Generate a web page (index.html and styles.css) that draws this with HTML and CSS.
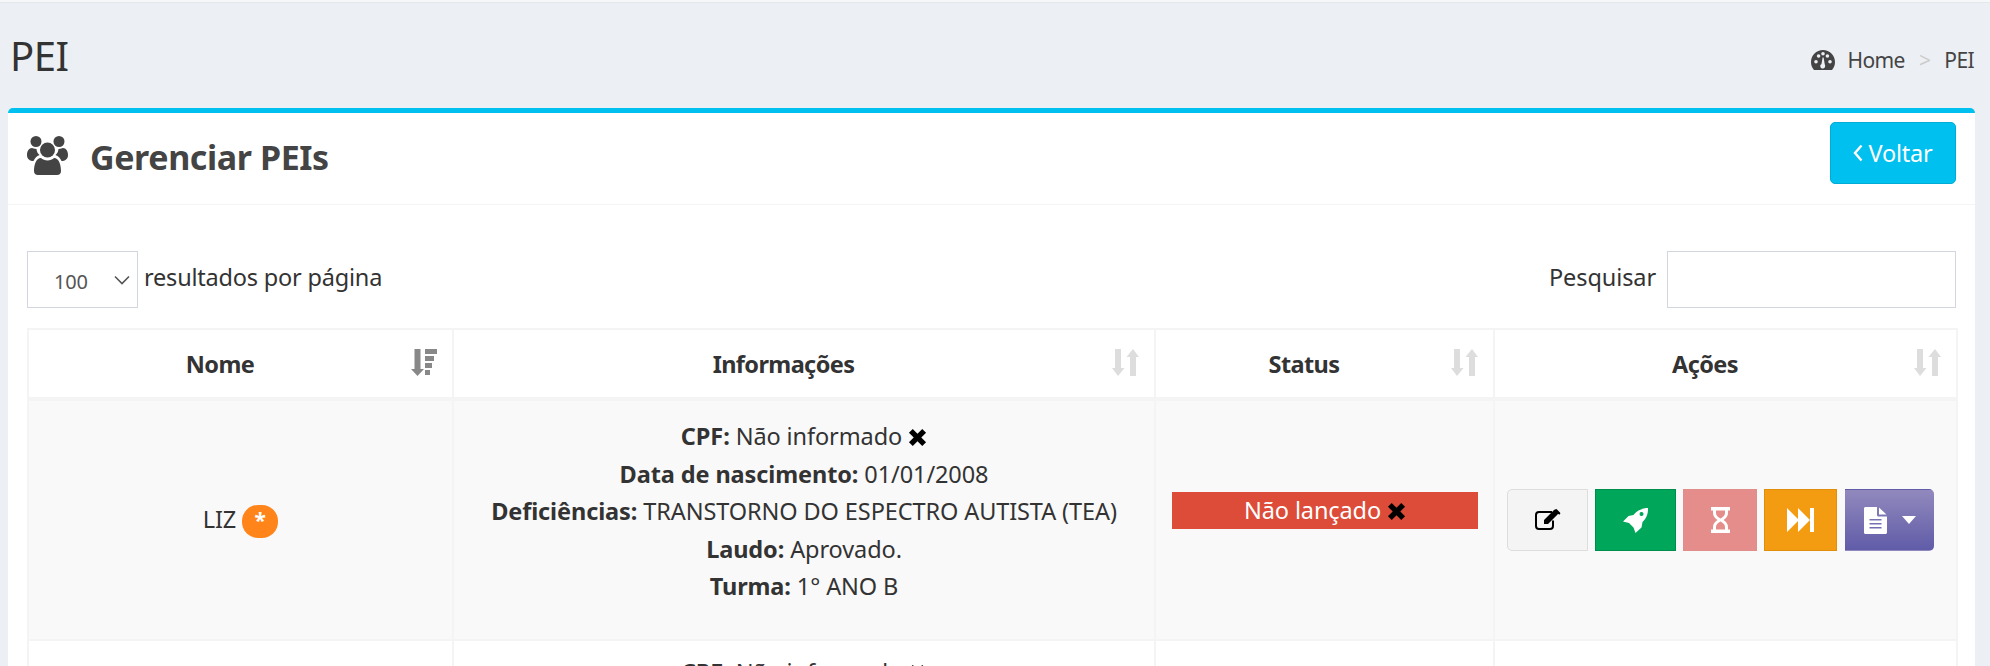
FILE: index.html
```html
<!DOCTYPE html>
<html lang="pt-BR">
<head>
    <meta charset="UTF-8">
    <title>PEI</title>
    <link rel="stylesheet" href="styles.css">
</head>
<body>
    <div class="topbar"></div>
    <div class="content-header">
        <h1 class="page-title">PEI</h1>
        <ol class="breadcrumb">
            <li class="crumb">
                <svg class="crumb-icon" viewBox="0 0 24 20"><path fill-rule="evenodd" d="M12 0C5.400 0 0 5.400 0 12c0 2.900 1 5.600 2.800 7.700.2.200.5.300.8.300h16.800c.3 0 .6-.1.800-.3C23 17.600 24 14.900 24 12 24 5.400 18.600 0 12 0zM5 13.500a1.800 1.800 0 1 1 0-3.600 1.800 1.800 0 0 1 0 3.600zm2.600-5.700a1.800 1.800 0 1 1 0-3.600 1.800 1.800 0 0 1 0 3.600zM12 5.500a1.800 1.800 0 1 1 0-3.600 1.800 1.800 0 0 1 0 3.600zm2.200 10.300a2.500 2.500 0 1 1-3.700-1.900l1.100-6.300h1l1.100 6.300c.2.600.4 1.300.5 1.900zm2.200-8a1.800 1.800 0 1 1 0-3.600 1.800 1.800 0 0 1 0 3.600zm2.600 5.700a1.800 1.800 0 1 1 0-3.600 1.800 1.800 0 0 1 0 3.600z"/></svg>
                Home
            </li>
            <li class="crumb-sep">&gt;</li>
            <li class="crumb">PEI</li>
        </ol>
    </div>

    <section class="box">
        <div class="box-header">
            <h3 class="box-title">
                <svg class="title-icon" viewBox="0 0 41 39"><circle cx="9" cy="5.500" r="5.500"/><circle cx="32" cy="5.500" r="5.500"/><circle cx="20.500" cy="14" r="7.500"/><path d="M0 19c0-4 2-7 5-7 1 0 2 .8 4.500 1 .2 2.500 1.200 4.500 3 6-3 1-5 3.500-6 6C3 25 0 23 0 19zM41 19c0-4-2-7-5-7-1 0-2 .8-4.500 1-.2 2.500-1.200 4.500-3 6 3 1 5 3.500 6 6 3.500 0 6.500-2 6.500-6zM11 39c-2.500 0-4-1.500-4-4 0-6 2-13 7-13 1.500 1.500 4 2.500 6.500 2.500s5-1 6.500-2.500c5 0 7 7 7 13 0 2.500-1.500 4-4 4z"/></svg>
                <span class="title-text">Gerenciar PEIs</span>
            </h3>
            <a class="btn-back"><svg class="back-icon" viewBox="0 0 10 18"><path d="M8.500 1.500 2 9l6.500 7.500" fill="none" stroke="#fff" stroke-width="2.400"/></svg>Voltar</a>
        </div>

        <div class="box-body">
            <div class="table-tools">
                <label class="length-control">
                    <span class="fake-select">
                        <span class="select-value">100</span>
                        <svg class="select-arrow" viewBox="0 0 16 10"><path d="M1 1.500 8 8.500l7-7" fill="none" stroke="#555" stroke-width="1.600"/></svg>
                    </span>
                    resultados por página
                </label>
                <label class="search-control">
                    Pesquisar
                    <span class="search-input"></span>
                </label>
            </div>

            <table class="data-table">
                <colgroup>
                    <col class="col-nome">
                    <col class="col-info">
                    <col class="col-status">
                    <col class="col-acoes">
                </colgroup>
                <thead>
                    <tr>
                        <th>Nome
                            <svg class="sort-icon sort-active" viewBox="0 0 26 27"><path d="M3.500 0h6v20h3.500l-6.500 7L0 20h3.500zM14 0h12v5H14zM14 7h9v5h-9zM14 14h7v5h-7zM14 21h5v5h-5z"/></svg>
                        </th>
                        <th>Informações
                            <svg class="sort-icon" viewBox="0 0 27 27"><path d="M3 0h6v19h3.500L6 27l-6-8h3zM18 8h-3.500L21 0l6 8h-3v19h-6z"/></svg>
                        </th>
                        <th>Status
                            <svg class="sort-icon" viewBox="0 0 27 27"><path d="M3 0h6v19h3.500L6 27l-6-8h3zM18 8h-3.500L21 0l6 8h-3v19h-6z"/></svg>
                        </th>
                        <th>Ações
                            <svg class="sort-icon" viewBox="0 0 27 27"><path d="M3 0h6v19h3.500L6 27l-6-8h3zM18 8h-3.500L21 0l6 8h-3v19h-6z"/></svg>
                        </th>
                    </tr>
                </thead>
                <tbody>
                    <tr class="row-odd">
                        <td>LIZ <span class="badge">*</span></td>
                        <td class="info-cell">
                            <b>CPF:</b> Não informado <svg class="x-icon" viewBox="0 0 20 20"><path d="M1 5l4-4 5 5 5-5 4 4-5 5 5 5-4 4-5-5-5 5-4-4 5-5z"/></svg><br>
                            <b>Data de nascimento:</b> 01/01/2008<br>
                            <b>Deficiências:</b> TRANSTORNO DO ESPECTRO AUTISTA (TEA)<br>
                            <b>Laudo:</b> Aprovado.<br>
                            <b>Turma:</b> 1° ANO B
                        </td>
                        <td class="status-cell">
                            <div class="status-label">Não lançado <svg class="x-icon" viewBox="0 0 20 20"><path d="M1 5l4-4 5 5 5-5 4 4-5 5 5 5-4 4-5-5-5 5-4-4 5-5z"/></svg></div>
                        </td>
                        <td>
                            <div class="btn-group">
                                <a class="act act-edit">
                                    <svg viewBox="0 0 26 22" width="26" height="22"><path d="M18 11.500V17a3 3 0 0 1-3 3H4a3 3 0 0 1-3-3V6a3 3 0 0 1 3-3h13" fill="none" stroke="#000" stroke-width="2"/><path d="M9 11 19.500 .5l4 4L13 15H9zM20.500 .2c.5-.4 1-.2 1.500.2l3 3c.4.500.4 1 0 1.500l-.8.800-4.500-4.500z"/></svg>
                                </a>
                                <a class="act act-green">
                                    <svg viewBox="0 0 25 25" width="25" height="25"><path fill="#fff" fill-rule="evenodd" d="M25 0c.2 5-1 10-5.500 14l-1 5.500L12.500 25l-2-5.500-4.500-4.500-6-1.500L5.500 8l5-1C14.500 2 20 0 25 0zM19 4a2 2 0 1 0 0 3.900A2 2 0 0 0 19 4z"/></svg>
                                </a>
                                <a class="act act-pink">
                                    <svg viewBox="0 0 19 26" width="19" height="26"><path fill="#fff" fill-rule="evenodd" d="M0 0h19v3.500h-2V6c0 3-2 5.500-4.500 7 2.500 1.500 4.500 4 4.500 7v2.500h2V26H0v-3.500h2V20c0-3 2-5.500 4.500-7C4 11.500 2 9 2 6V3.500H0zM5 3.500V6c0 2 1.500 4 4.500 5.500C12.500 10 14 8 14 6V3.500zM9.500 14.500C6.500 16 5 18 5 20v2.500h9V20c0-2-1.500-4-4.500-5.500z"/></svg>
                                </a>
                                <a class="act act-orange">
                                    <svg viewBox="0 0 27 24" width="27" height="24"><path fill="#fff" d="M0 0l12 12L0 24zM11 0l12 12-12 12zM23 0h4v24h-4z"/></svg>
                                </a>
                                <a class="act act-purple">
                                    <svg viewBox="0 0 23 27" width="23" height="27"><path fill="#fff" fill-rule="evenodd" d="M0 1.500C0 .7.700 0 1.500 0H13v8c0 .8.700 1.500 1.500 1.500H23v16c0 .8-.7 1.500-1.500 1.500h-20C.7 27 0 26.300 0 25.500zM15 .5 22.500 7.500H15zM5.500 12v1.500h12V12zM5.500 16v1.500h12V16zM5.500 20v1.500h12V20z"/></svg>
                                    <span class="caret"></span>
                                </a>
                            </div>
                        </td>
                    </tr>
                    <tr>
                        <td></td>
                        <td class="info-cell info-next">
                            <b>CPF:</b> Não informado <svg class="x-icon" viewBox="0 0 20 20"><path d="M1 5l4-4 5 5 5-5 4 4-5 5 5 5-4 4-5-5-5 5-4-4 5-5z"/></svg>
                        </td>
                        <td></td>
                        <td></td>
                    </tr>
                </tbody>
            </table>
        </div>
    </section>
</body>
</html>
```

FILE: styles.css
```css
* {
    box-sizing: border-box;
}

html, body {
    height: 666px;
    overflow: hidden;
}

body {
    margin: 0;
    background-color: #ecf0f5;
    color: #333;
    font-family: "Noto Sans", sans-serif;
    font-size: 23.500px;
    letter-spacing: -0.1px;
}

b {
    letter-spacing: -0.1px;
}

.topbar {
    height: 3px;
    border-bottom: 1px solid #e3e6ea;
    background-color: #f6f7f9;
}

.content-header {
    display: flex;
    justify-content: space-between;
    align-items: center;
    height: 105px;
    padding: 0 16px 0 10px;
}

.page-title {
    margin: 0;
    color: #333;
    font-size: 40px;
    font-weight: 400;
    letter-spacing: -0.5px;
}

.breadcrumb {
    display: flex;
    align-items: center;
    gap: 14px;
    margin: 8px 0 0;
    padding: 0;
    list-style: none;
    color: #444;
    font-size: 21px;
    letter-spacing: -0.6px;
}

.crumb {
    display: flex;
    align-items: center;
    gap: 13px;
}

.crumb-icon {
    width: 24px;
    height: 20px;
    fill: #444;
}

.crumb-sep {
    color: #ccc;
}

.box {
    margin: 0 15px 0 8px;
    border-top: 5px solid #00c0ef;
    border-radius: 5px 5px 0 0;
    background-color: #fff;
}

.box-header {
    display: flex;
    justify-content: space-between;
    height: 92px;
    padding: 9px 19px 0 19px;
    border-bottom: 1px solid #f4f4f4;
}

.box-title {
    display: flex;
    align-items: center;
    gap: 22px;
    height: 62px;
    margin: 4px 0 0;
    color: #444;
    font-size: 34px;
    font-weight: 700;
    letter-spacing: -0.4px;
}

.title-icon {
    width: 41px;
    height: 39px;
    margin-top: -3px;
    fill: #444;
}

.btn-back {
    display: flex;
    align-items: center;
    justify-content: center;
    gap: 5px;
    width: 126px;
    height: 62px;
    border: 1px solid #00acd6;
    border-radius: 5px;
    background-color: #00c0ef;
    color: #fff;
    letter-spacing: -0.2px;
}

.back-icon {
    width: 10px;
    height: 18px;
}

.box-body {
    padding: 46px 19px 0 19px;
}

.table-tools {
    display: flex;
    justify-content: space-between;
    margin-bottom: 20px;
    line-height: 52px;
}

.length-control, .search-control {
    display: flex;
    align-items: flex-start;
    gap: 6px;
}

.length-control {
    letter-spacing: -0.2px;
}

.search-control {
    gap: 11px;
}

.fake-select {
    display: flex;
    align-items: center;
    justify-content: space-between;
    width: 111px;
    height: 57px;
    padding: 4px 7px 0 26px;
    border: 1px solid #d2d6de;
    color: #555;
    font-size: 20px;
}

.select-arrow {
    width: 16px;
    height: 10px;
    margin-top: -4px;
}

.search-input {
    width: 289px;
    height: 57px;
    border: 1px solid #d2d6de;
}

.data-table {
    width: 100%;
    border-collapse: collapse;
    table-layout: fixed;
    border: 2px solid #f4f4f4;
}

.col-nome { width: 425px; }
.col-info { width: 702px; }
.col-status { width: 339px; }
.col-acoes { width: 463px; }

.data-table th, .data-table td {
    border: 2px solid #f4f4f4;
    text-align: center;
    vertical-align: middle;
}

.data-table th {
    position: relative;
    height: 70px;
    padding-right: 42px;
    border-bottom-width: 4px;
    font-weight: 700;
    letter-spacing: -0.6px;
}

.data-table td {
    line-height: 37.500px;
}

.data-table td.info-cell {
    padding-top: 17px;
    vertical-align: top;
}

.data-table td.info-next {
    padding-top: 13px;
}

.data-table .row-odd td {
    height: 241px;
}

.row-odd {
    background-color: #f9f9f9;
}

.data-table td.status-cell {
    padding-bottom: 21px;
}

.sort-icon {
    position: absolute;
    top: 19px;
    right: 15px;
    width: 27px;
    height: 27px;
    fill: #ddd;
}

.sort-active {
    width: 26px;
    fill: #888;
}

.x-icon {
    width: 19px;
    height: 19px;
    vertical-align: -2px;
    fill: #000;
}

.badge {
    display: inline-block;
    width: 36px;
    height: 33px;
    border-radius: 16px;
    background-color: #ff851b;
    color: #fff;
    font-size: 21px;
    font-weight: 700;
    line-height: 30px;
    vertical-align: 0;
}

.status-label {
    height: 37px;
    margin: 0 14px 0 15px;
    background-color: #dd4b39;
    color: #fff;
    line-height: 37px;
}

.btn-group {
    display: flex;
    gap: 7px;
    padding-left: 11px;
}

.act {
    display: flex;
    align-items: center;
    justify-content: center;
    width: 81px;
    height: 62px;
    border: 1px solid transparent;
}

.act-edit {
    border-color: #ddd;
    border-radius: 5px 0 0 5px;
    background-color: #f4f4f4;
}

.act-green {
    border-color: #008d4c;
    background-color: #00a65a;
}

.act-pink {
    width: 74px;
    border-color: #e08e8b;
    background-color: #e48d8a;
}

.act-orange {
    width: 73px;
    border-color: #e08e0b;
    background-color: #f39c12;
}

.act-purple {
    gap: 15px;
    width: 89px;
    margin-left: 1px;
    border-radius: 0 5px 5px 0;
    background: linear-gradient(#9189bd, #605ca8);
}

.caret {
    width: 0;
    height: 0;
    border-top: 8px solid #fff;
    border-left: 7px solid transparent;
    border-right: 7px solid transparent;
}
```
